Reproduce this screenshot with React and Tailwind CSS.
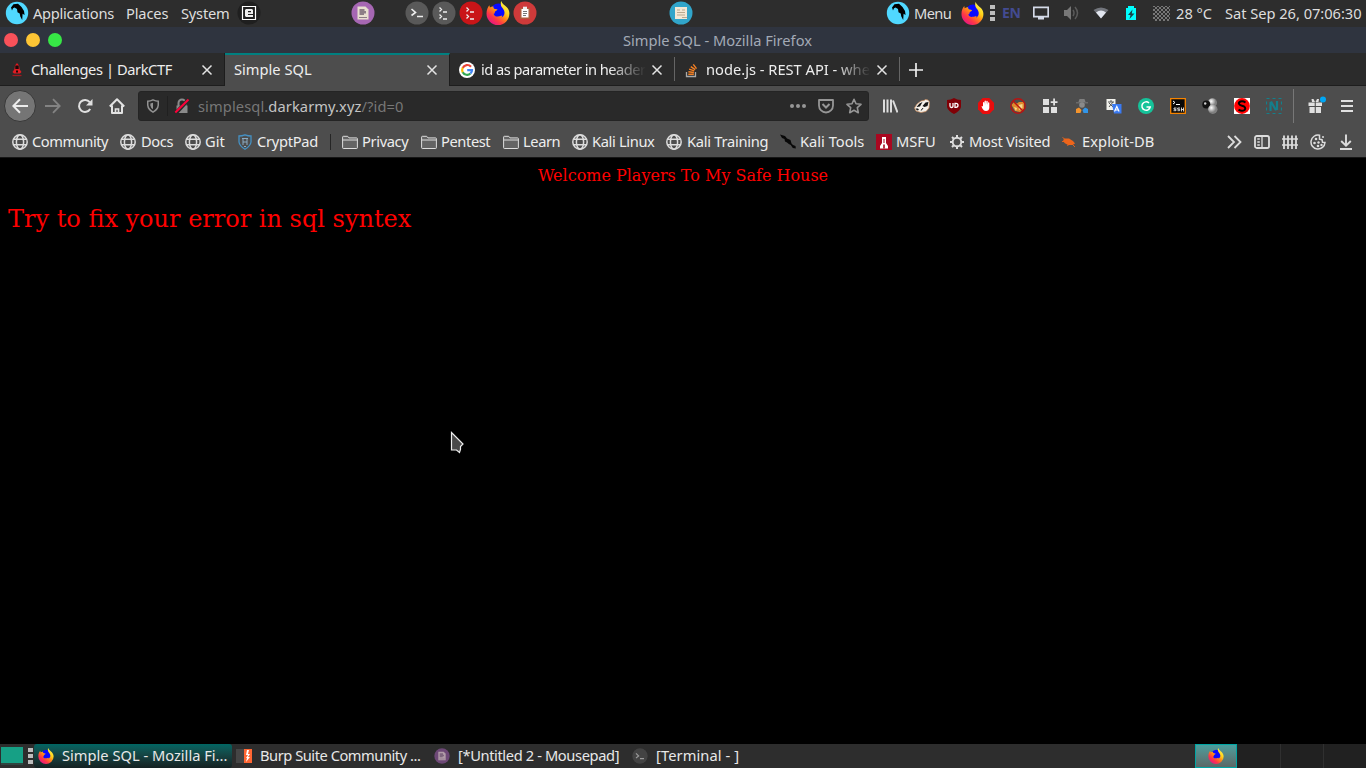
import React from "react";

const Svg = ({ s = 16, vb = "0 0 16 16", className = "", children }) => (
  <svg width={s} height={s} viewBox={vb} fill="none" className={"shrink-0 " + className}>{children}</svg>
);
const Slot = ({ className, children }) => (
  <div className={"flex shrink-0 items-center whitespace-nowrap " + className}>{children}</div>
);

const Firefox = ({ s = 22, id }) => (
  <Svg s={s} vb="0 0 24 24">
    <defs>
      <linearGradient id={id} x1="20" y1="2" x2="4" y2="22" gradientUnits="userSpaceOnUse">
        <stop offset="0" stopColor="#fff44f" /><stop offset=".3" stopColor="#ffd31a" /><stop offset=".5" stopColor="#ff8a16" /><stop offset=".75" stopColor="#ff3647" /><stop offset="1" stopColor="#e31587" />
      </linearGradient>
    </defs>
    <circle cx="12.500" cy="10.500" r="8" fill="#0a0aff" />
    <path fill={`url(#${id})`} d="M15.200 0c1 3 3.500 4.200 5.600 6.300 1.600 1.700 2.600 3.800 2.600 6.200A11.400 11.400 0 0 1 12 24 11.500 11.500 0 0 1 .5 12.500C.5 8.800 1.800 6 3.400 4.200l.5 2.200C5 5.700 6.200 5.300 7.500 5.500 7.200 7.200 8 8 10.500 8.200l1 .3c-.4 1.100-2.300 1.400-2.600 2.600-.4 1.200.2 1.700-1.300 1.600.5 2 2 3 4.300 2.800 2.200-.2 3.100-.7 4.200-1 .2.800-.2 1.400-.7 1.900 2.400-.9 3.400-3.200 3-5.700-.3-2-1.600-3.200-2.700-4.700-.9-1.300-1.300-3.500-.5-6z" />
  </Svg>
);
const Parrot = () => (
  <Svg s={24} vb="0 0 24 24">
    <circle cx="12" cy="12" r="11.200" fill="#50d8ff" />
    <path fill="#000" d="M6 6.500 8.500 3.300 13 2.800l3.500 3.200L19 10l.6 4-2-1.300-.4 6.300-1.900-3.500-.6-3-2.200-1.300-.5-3.200-2.500-1.500-1.500.7L7 9.500z" />
  </Svg>
);
const Disc = ({ c, s = 24, children }) => (
  <Svg s={s} vb="0 0 24 24"><circle cx="12" cy="12" r="11.500" fill={c} />{children}</Svg>
);
const NoteGlyph = () => (
  <g><path fill="#e8dfd0" d="M6.500 5.500h8l3 3v10h-11z" /><path fill="#8d7f86" d="M8.500 8h5v2h1.500v2.500h-2V14H8.500zM8 16h8v1H8z" /></g>
);
const TwoPrompts = () => <path stroke="#eee" strokeWidth="1.300" d="m7.500 6.500 2 2-2 2m3.500.5h4M7.500 13.500l2 2-2 2m3.500.5h4" />;
const Globe = () => (
  <Svg><g stroke="#dcdcdc" strokeWidth="1.500"><circle cx="8" cy="8" r="7.200" /><ellipse cx="8" cy="8" rx="3.600" ry="7.200" /><path d="M1.500 5.300h13M1.500 10.700h13" /></g></Svg>
);
const Folder = () => (
  <Svg><path d="M.6 13.700V3.100c0-.5.3-.8.8-.8h4.300l1.300 1.600h7.600c.5 0 .8.300.8.800v9.100c0 .4-.3.700-.7.700H1.300c-.4 0-.7-.3-.7-.8z" fill="#646464" stroke="#ddd" /><path d="M.8 6h14.500" stroke="#ddd" /></Svg>
);
const Close = () => <Svg s={12} vb="0 0 12 12"><path d="m1.500 1.500 9 9m0-9-9 9" stroke="#e3e3e3" strokeWidth="1.500" /></Svg>;
const Dots = () => (
  <div className="flex w-[5px] shrink-0 flex-col gap-[2px]">
    <div className="h-[4px] bg-[#bdbdbd]" /><div className="h-[4px] bg-[#bdbdbd]" /><div className="h-[4px] bg-[#bdbdbd]" />
  </div>
);

const TopPanel = () => (
  <div className="flex h-[27px] items-center bg-[#2d2d2d] pb-px text-[#dedede]">
    <Slot className="w-[33px] pl-[5px]"><Parrot /></Slot>
    <Slot className="w-[93px] tracking-[-0.27px]">Applications</Slot>
    <Slot className="w-[55px] tracking-[-0.15px]">Places</Slot>
    <Slot className="w-[56px] tracking-[-0.2px]">System</Slot>
    <Slot className="w-[114px]">
      <Disc c="#1f1f1f"><path d="M5.500 5.500h13v13h-13z" stroke="#fff" strokeWidth="1.200" /><path fill="#eee" fillRule="evenodd" d="M9 8h6l1 1v4h-5v1h5v2H9l-1-1V9zm2 2v1.200h3V10z" /></Disc>
    </Slot>
    <Slot className="w-[54px]"><Disc c="#a667b3"><NoteGlyph /></Disc></Slot>
    <Slot className="w-[27px]"><Disc c="#595959"><path stroke="#eee" strokeWidth="1.600" d="m6.500 8 4 3.500-4 3M12 15.500h6" /></Disc></Slot>
    <Slot className="w-[27px]"><Disc c="#595959"><TwoPrompts /></Disc></Slot>
    <Slot className="w-[27px]"><Disc c="#c91518"><TwoPrompts /></Disc></Slot>
    <Slot className="w-[27px]"><Firefox s={24} id="f1" /></Slot>
    <Slot className="w-[156px]"><Disc c="#cf3a3a"><path fill="#b15b3c" d="M7 7h10v11H7z" /><path fill="#fff" d="M8.500 8h7v8.500h-7z" /><path d="M10 10.500h4m-4 2h4m-4 2h3" stroke="#777" /><path fill="#eee" d="M10 5.700h4v2.500h-4z" /></Disc></Slot>
    <Slot className="w-[217px]"><Disc c="#31a5ca"><path fill="#f3e8d5" d="M6 6h12v12H6z" /><path d="M8 9h3m2 0h3M8 11.500h8M8 14h8M13 16.500h5" stroke="#b8a990" /></Disc></Slot>
    <Slot className="w-[28px]"><Parrot /></Slot>
    <Slot className="w-[47px] tracking-[-0.6px]">Menu</Slot>
    <Slot className="w-[29px]"><Firefox s={23} id="f2" /></Slot>
    <Slot className="w-[12px]"><Dots /></Slot>
    <Slot className="w-[31px] text-[14px] font-bold tracking-[-0.4px] text-[#434b91]">EN</Slot>
    <Slot className="w-[30px]"><Svg><path d="M.8 2.300h14.400v9.400H.8z" stroke="#d4dae8" strokeWidth="1.700" /><path d="M5 12h6v2.500H5z" fill="#d4dae8" /></Svg></Slot>
    <Slot className="w-[30px]"><Svg><path fill="#777" d="M1 5h3l4-4v14l-4-4H1z" /><path d="M10 5q2 3 0 6m2-9q5 6 0 12" stroke="#5b5b5b" strokeWidth="1.500" /></Svg></Slot>
    <Slot className="w-[30px]"><Svg><path fill="#72757c" d="M.5 5Q8 0 15.500 5L8 13z" /><path fill="#e2e6ef" d="M3 7.500Q8 3.500 13 7.500L8 13.500z" /></Svg></Slot>
    <Slot className="w-[30px]"><Svg><path fill="#00fdfd" d="M5 1h6v2h2v12H3V3h2z" /><path fill="#174247" d="M9.500 4.500 5 10h2.500l-1 4 5-5.500H8.800z" /></Svg></Slot>
    <Slot className="w-[23px]">
      <Svg s={17} vb="0 0 17 17">
        <defs><pattern id="chk" width="4" height="4" patternUnits="userSpaceOnUse"><path fill="#777" d="M0 0h2v2H0zM2 2h2v2H2z" /></pattern></defs>
        <path fill="url(#chk)" d="M0 1h17v15H0z" />
      </Svg>
    </Slot>
    <Slot className="w-[49px]">28 °C</Slot>
    <Slot className="tracking-[-0.03px]">Sat Sep 26, 07:06:30</Slot>
  </div>
);

const TitleBar = () => (
  <div className="flex h-[26px] items-center bg-[#2f343f]">
    <div className="flex w-[69px] shrink-0 gap-[8px] pl-[4px]">
      <div className="size-[14px] rounded-full bg-[#f8515a]" />
      <div className="size-[14px] rounded-full bg-[#fdc535]" />
      <div className="size-[14px] rounded-full bg-[#37e746]" />
    </div>
    <div className="flex-1 text-center text-[#a3aab6]">Simple SQL - Mozilla Firefox</div>
  </div>
);

const TabStrip = () => (
  <div className="flex h-[33px] items-center bg-[#2b2b2b] text-[#ededed] [&_svg]:translate-y-px">
    <div className="flex h-full w-[225px] shrink-0 items-center border-r border-b border-[#1d1d1d] pl-[9px]">
      <Svg className="mr-[6px]"><path fill="#e01b22" d="M6 3.500 8 1l2 2.500.7 4L12.500 10 11 11.500H5L3.500 10l1.800-2.500z" /><path fill="#1b0808" d="M6.300 3.500h3.400V7H6.300zM7 8.500h2v2H7z" /><path d="M3.500 13.500h9" stroke="#a01a1f" strokeWidth="1.300" /></Svg>
      <div className="w-[170px] tracking-[-0.42px] whitespace-nowrap">Challenges | DarkCTF</div><Close />
    </div>
    <div className="flex h-full w-[225px] shrink-0 items-center border-t-2 border-r border-t-[#008080] border-r-[#1d1d1d] bg-[#4d4d4d] pb-[3px] pl-[9px]">
      <div className="w-[192px] whitespace-nowrap">Simple SQL</div><Close />
    </div>
    <div className="flex h-full flex-1 items-center border-b border-[#1d1d1d]">
      <div className="flex h-[24px] w-[225px] shrink-0 items-center border-r border-[#656565] pl-[9px]">
        <Svg className="mr-[6px]"><circle cx="8" cy="8" r="8" fill="#fff" /><g strokeWidth="2.200"><path d="M12 4.700A5 5 0 0 0 3.700 6" stroke="#ea4335" /><path d="M3.700 5.800a5 5 0 0 0 0 4.600" stroke="#fbbc05" /><path d="M3.700 10.200a5 5 0 0 0 7.800 1.300" stroke="#34a853" /><path d="M11.500 11.500c1.100-1 1.500-2 1.500-3.300H8.200" stroke="#4285f4" /></g></Svg>
        <div className="w-[170px] tracking-[-0.53px] whitespace-nowrap [mask-image:linear-gradient(to_right,#000_76%,transparent_97%)]">id as parameter in header</div><Close />
      </div>
      <div className="flex h-[24px] w-[225px] shrink-0 items-center border-r border-[#656565] pl-[9px]">
        <Svg className="mr-[6px]"><path d="M2.500 10v4.500h9V10" stroke="#aaa" strokeWidth="1.300" /><path d="M4.300 12.300h5.500M4.400 9.800l5.500.7M5.100 7.200l5.200 1.600M6.800 4.600l4.400 3M9.300 2.300l3.200 4.300" stroke="#f48024" strokeWidth="1.400" /></Svg>
        <div className="w-[170px] whitespace-nowrap [mask-image:linear-gradient(to_right,#000_76%,transparent_97%)]">node.js - REST API - whe</div><Close />
      </div>
      <Svg className="ml-[8px]"><path d="M8 1v14M1 8h14" stroke="#eee" strokeWidth="1.700" /></Svg>
    </div>
  </div>
);

const Ext = ({ children }) => <div className="flex w-[32px] shrink-0 justify-center"><Svg>{children}</Svg></div>;

const NavBar = () => (
  <div className="flex h-[40px] items-center bg-[#4d4d4d]">
    <div className="ml-[4px] flex size-[32px] shrink-0 items-center justify-center rounded-full border border-[#383838] bg-[#757575]">
      <Svg><path d="M16 8H1.500M8 1.200 1.300 8 8 14.800" stroke="#ececec" strokeWidth="2" /></Svg>
    </div>
    <Svg className="ml-[9px]"><path d="M0 8h14.500M8 1.200 14.700 8 8 14.800" stroke="#838383" strokeWidth="1.800" /></Svg>
    <Svg className="ml-[16px]"><path d="M13.200 11a6 6 0 1 1-.5-6.800" stroke="#e0e0e0" strokeWidth="2" /><path fill="#e0e0e0" d="M15.500 1v6.500H9z" /></Svg>
    <Svg className="ml-[16px]"><path d="M.8 8.500 8 1.300l7.200 7.200M3 7.500V15h10V7.500" stroke="#e3e3e3" strokeWidth="2" strokeLinejoin="round" /><path d="M6.500 15v-4h3v4" stroke="#e3e3e3" strokeWidth="1.700" /></Svg>
    <div className="ml-[13px] flex h-[30px] w-[731px] shrink-0 items-center rounded-[3px] border border-[#242424] bg-[#292929]">
      <Svg s={14} className="ml-[7px]"><path d="M8 1Q11 2.500 14 2.500V7Q13.500 12 8 15 2.500 12 2 7V2.500Q5 2.500 8 1z" stroke="#929292" strokeWidth="1.700" /><path d="M8 4.200v7.600Q5.300 10 5 7.500V5z" fill="#929292" /></Svg>
      <div className="ml-[7px] h-[20px] w-px bg-[#202020]" />
      <Svg className="ml-[6px]"><path d="M4.500 8V5a3.500 3.500 0 0 1 7 0v3" stroke="#8b8b8b" strokeWidth="2" /><path fill="#8b8b8b" d="M2.500 7.500h11V15h-11z" /><path d="M1.500 15.500 14 2" stroke="#292929" strokeWidth="4" /><path d="M1.300 14.500 14.500 1.500" stroke="#ff0039" strokeWidth="2" /></Svg>
      <div className="ml-[8px] w-[592px] tracking-[0.1px] whitespace-nowrap text-[#777]">simplesql.<span className="text-[#c4c4c4]">darkarmy.xyz</span>/?id=0</div>
      <Svg><g fill="#969696"><circle cx="2" cy="8" r="2" /><circle cx="8" cy="8" r="2" /><circle cx="14" cy="8" r="2" /></g></Svg>
      <Svg className="ml-[12px]"><path d="M1 2h14v5.500a7 7 0 0 1-14 0z" stroke="#969696" strokeWidth="1.800" strokeLinejoin="round" /><path d="m4.500 6 3.500 3.500L11.500 6" stroke="#969696" strokeWidth="2" /></Svg>
      <Svg className="ml-[12px]"><path d="m8 1.300 2 4.500 5 .5-3.700 3.400 1 5L8 12.200l-4.300 2.500 1-5L1 6.300l5-.5z" stroke="#969696" strokeWidth="1.600" strokeLinejoin="round" /></Svg>
    </div>
    <div className="ml-[5px] flex shrink-0">
      <Ext><path d="M2 1.500v13M5.500 1.500v13M9 1.500v13M11 2.500l4.500 12" stroke="#ddd" strokeWidth="2" /></Ext>
      <Ext><path fill="#f5f1eb" stroke="#c98a5a" strokeWidth=".7" d="M.5 10 3 6 7 3l3-.5 1.500-1L14 2l1.500 2-.5 6-3 3.500-5 1L2 13z" /><path fill="#161616" d="m2.500 9 3-3.500L8.500 4 6 8.500zM8.500 8l3-3.500L14.500 4l-1 4-3 1zM1.500 10.500l2.500 0L5 12l-2 .5zM8.500 10l1 .2-2 2.300h-1z" /></Ext>
      <Ext><path fill="#800006" d="M8 0q3 2 7 2v7q-1 4-7 7-6-3-7-7V2q4 0 7-2z" /><path d="M4 5v3q0 1.500 1.500 1.500T7 8V5m2 .3v4h1q2 0 2-2t-2-2z" stroke="#fff" strokeWidth="1.300" /></Ext>
      <Ext><path fill="#e90d0d" d="M4.700 0h6.600L16 4.700v6.600L11.300 16H4.700L0 11.300V4.700z" /><path fill="#fff" d="M5 4.500q.7-.8 1.300 0V7l.3-4q.7-.8 1.300 0V7l.5-4q.8-.7 1.300.2V7l.4-2.500q.8-.5 1.200.3V10q-.3 3-3.300 3-2.300 0-3.500-2.300L3.500 8.500q.5-1 1.500 0z" /></Ext>
      <Ext><path fill="#e08a2c" d="M1.500 7 4 4l3 1.500L9 4l5 0v7l-4 3-5-1z" /><path fill="#f7d98c" d="m8.500 7 4-1v4L9 12zM4 9l3 1-1 3z" /><circle cx="8" cy="8" r="7.200" stroke="#b81413" strokeWidth="1.400" /><path d="m3 3 10 10" stroke="#b81413" strokeWidth="1.300" /></Ext>
      <Ext><path fill="#e0e0e0" d="M1 1h6v6H1zM1 9h6v6H1zM9 9h6v6H9zM11.200.5h1.800v2.700h2.500V5H13v2.500h-1.800V5H8.700V3.200h2.500z" /></Ext>
      <Ext><path fill="#808080" d="M5.500 1h5L11.500 4h-7z" /><path fill="#6b6b6b" d="M2 4h12v1.500H2z" /><circle cx="8" cy="7" r="2.800" fill="#8a8a8a" /><path fill="#f4942d" d="M2 15v-4l3-1.500 2.500 2.500-1 3z" /><path fill="#3295e8" d="M14 15v-4l-3-1.500L8.500 12l1 3z" /></Ext>
      <Ext><path fill="#f1f1ec" d="M.5 1h9v11h-9z" /><path d="M2 4h6M5 2v2M3 9l4-5M3 5l4 4" stroke="#555" /><path fill="#3a7af2" d="M6 6h9.500v9.500H8z" /><path d="m8.500 13.500 2.300-5 2.300 5m-3.800-1.500h3" stroke="#fff" strokeWidth="1.200" /></Ext>
      <Ext><circle cx="8" cy="8" r="8" fill="#15c39a" /><path d="M11 5A4.200 4.200 0 1 0 12.200 9H8.500" stroke="#fff" strokeWidth="1.500" /></Ext>
      <Ext><path fill="#080808" stroke="#f68400" strokeWidth="1.300" d="M.7.7h14.600v14.600H.7z" /><path d="m3 3 2 1.500L3 6m3 .5h4" stroke="#fff" /><path d="M6.500 10H4v1.300h2v1.400H3.500M10 10H7.700v1.300h2v1.400H7.500M11.500 9.500v4m2-4v4m-2-2h2" stroke="#fff" strokeWidth=".8" /></Ext>
      <Ext><defs><radialGradient id="b1" cx=".35" cy=".35"><stop stopColor="#fff" /><stop offset="1" stopColor="#808080" /></radialGradient></defs><circle cx="10.500" cy="4.700" r="4.500" fill="url(#b1)" /><circle cx="4.300" cy="6.500" r="4" fill="#111" /><circle cx="3.200" cy="5.500" r="1.200" fill="#ccc" /><circle cx="10.800" cy="11.200" r="4.700" fill="url(#b1)" /></Ext>
      <Ext><path fill="#fff" d="M0 0h16v16H0z" /><circle cx="8" cy="8" r="7.900" fill="#f00" /><path d="M11.500 4.500Q9 2.700 6.500 3.500C3.500 5 5 7 8 7.700s4.200 2.500 2.500 4.300q-2.500 1.800-6-.3" stroke="#000" strokeWidth="2" /></Ext>
      <Ext><path d="M.5.500h15v15H.5z" stroke="#12808c" strokeWidth="1.200" strokeDasharray="3 3" /><path d="M4.500 13V5l1-.5 4 7 1.500-.5V3" stroke="#147e8b" strokeWidth="2.200" /></Ext>
    </div>
    <div className="ml-[3px] h-[34px] w-px shrink-0 bg-[#777]" />
    <Svg s={20} vb="0 0 20 20" className="ml-[12px]"><path fill="#e0e0e0" d="M2.500 6.500h6.200v3.500H2.500zM9.800 6.500H16v3.500H9.800zM3.500 11h5.200v6H3.500zM9.800 11H15v6H9.800zM5.500 3h2l1.500 3h-3zM13 3h-2L9.500 6h3z" /><circle cx="17" cy="3.500" r="3" fill="#00a7f5" /></Svg>
    <Svg className="ml-[13px]"><path d="M2 3h12M2 8h12M2 13h12" stroke="#e0e0e0" strokeWidth="2" /></Svg>
  </div>
);

const Bookmarks = () => (
  <div className="flex h-[32px] items-center border-b border-[#161616] bg-[#4d4d4d] pb-px pl-[12px] text-[#ededed] [&_svg]:translate-y-px">
    <Slot className="w-[108px] gap-[4px] tracking-[-0.45px]"><Globe />Community</Slot>
    <Slot className="w-[65px] gap-[5px] tracking-[-0.35px]"><Globe />Docs</Slot>
    <Slot className="w-[52px] gap-[4px]"><Globe />Git</Slot>
    <Slot className="w-[93px] gap-[4px] tracking-[-0.28px]"><Svg><path d="M8 .8q3 1.200 6 1.200v6q-.5 4-6 7.200Q2.500 12 2 8V2q3 0 6-1.200z" stroke="#4591c4" strokeWidth="1.300" /><path d="M5 4.500h6M6 5v6m4-6v6M6 8h4M7 12l1 1 1-1" stroke="#8bacc4" /></Svg>CryptPad</Slot>
    <Slot className="w-[12px]"><div className="h-[16px] w-px translate-y-px bg-[#252525]" /></Slot>
    <Slot className="w-[79px] gap-[4px] tracking-[-0.35px]"><Folder />Privacy</Slot>
    <Slot className="w-[82px] gap-[4px] tracking-[-0.4px]"><Folder />Pentest</Slot>
    <Slot className="w-[69px] gap-[4px] tracking-[-0.4px]"><Folder />Learn</Slot>
    <Slot className="w-[94px] gap-[4px] tracking-[-0.35px]"><Globe />Kali Linux</Slot>
    <Slot className="w-[114px] gap-[5px] tracking-[-0.27px]"><Globe />Kali Training</Slot>
    <Slot className="w-[96px] gap-[4px]"><Svg><path fill="#080808" d="m0 .5 5 1.500 2 2.500 3.500 1.500 1 3.500 1.500 1.500 2.500 1 .3 2.500-3-.5-2-3-2-1L7 8.500 5 7.500 4.500 5 2 4z" /></Svg>Kali Tools</Slot>
    <Slot className="w-[73px] gap-[4px]"><Svg><path fill="#a90720" d="M0 0h16v16H0z" /><path fill="#fff" d="M6 3h4v6l2 3v2.500H4V12l2-3z" /><path fill="#a90720" d="M7.500 5h1v4h-1zM7.200 10.500h1.600v4H7.200z" /></Svg>MSFU</Slot>
    <Slot className="w-[112px] gap-[4px] tracking-[-0.25px]"><Svg><circle cx="8" cy="8" r="4.300" stroke="#ddd" strokeWidth="1.900" /><path d="M8 1v2.500M8 12.500V15M1 8h2.500m9 0H15M3 3l1.800 1.800m6.400 6.400L13 13M13 3l-1.800 1.800m-6.400 6.400L3 13" stroke="#ddd" strokeWidth="2" /></Svg>Most Visited</Slot>
    <Slot className="w-[165px] gap-[5px] tracking-[0.08px]"><Svg><path fill="#ed651b" d="m2 6 2-1.500 4 0 4 2.500 2 2.500L11.500 11 7 11 3.500 9z" /><path d="m1.500 3.500 3 2M1 7.500h3m4 2L6.500 12M10 9l4 4" stroke="#ed651b" strokeWidth=".9" /></Svg>Exploit-DB</Slot>
    <Slot className="w-[28px]"><Svg><path d="m2 2 6 6-6 6M8.500 2l6 6-6 6" stroke="#ddd" strokeWidth="1.800" /></Svg></Slot>
    <Slot className="w-[28px]"><Svg><rect x="1" y="2" width="14" height="12" rx="1.800" stroke="#ddd" strokeWidth="1.800" /><path d="M8 2v12M3.300 5h2.500m-2.500 3h2.500m-2.500 3h2.500" stroke="#ddd" strokeWidth="1.300" /></Svg></Slot>
    <Slot className="w-[28px]"><Svg><path d="M2 1.500v13.500M6 1.500v13.500M10 1.500v13.500M14 1.500v13.500" stroke="#ddd" strokeWidth="1.800" /><path d="M0 5h16M0 11h16" stroke="#ddd" strokeWidth="1.500" /></Svg></Slot>
    <Slot className="w-[28px]"><Svg><path d="M9.500 1.200A7 7 0 1 0 15 8.500l-2.500-.3-.5-2.500-2.500-.5z" stroke="#ddd" strokeWidth="1.500" /><g fill="#ddd"><circle cx="6" cy="5" r="1.300" /><circle cx="4.500" cy="9" r="1.300" /><circle cx="8.500" cy="8.500" r="1.200" /><circle cx="8" cy="12" r="1.300" /><circle cx="11.500" cy="11" r="1.200" /><circle cx="13" cy="3" r="1" /></g></Svg></Slot>
    <Slot><Svg><path d="M8 .5v11M3.200 7 8 11.700 12.800 7M2 15h12" stroke="#ddd" strokeWidth="1.900" /></Svg></Slot>
  </div>
);

const Taskbar = () => (
  <div className="flex h-[24px] items-center bg-[#2d2d2d] text-[#e8e8e8]">
    <div className="mr-[5px] ml-px flex h-[18px] w-[22px] shrink-0 items-end bg-[#16a085]"><div className="h-[2px] w-full bg-[#30443f]" /></div>
    <Dots />
    <div className="ml-px flex h-full w-[198px] shrink-0 items-center rounded-[3px] bg-gradient-to-b from-[#006663] to-[#142122] pb-[2px] pl-[4px] [&_svg]:translate-y-px">
      <Firefox s={16} id="f3" /><span className="ml-[8px] whitespace-nowrap">Simple SQL - Mozilla Fi...</span>
    </div>
    <Slot className="ml-[4px] w-[198px] gap-[8px] pb-[2px] tracking-[-0.46px] [&_svg]:translate-y-px"><Svg><path fill="#454545" d="M0 1h8v14H0z" /><path fill="#ff6633" d="M8 1h8v14H8z" /><path fill="#fff" d="m11 2-1 5h2l-2 3h1l-1 4 4-5h-2l2-3h-2l1-4z" /></Svg>Burp Suite Community ...</Slot>
    <Slot className="w-[198px] gap-[8px] pb-[2px] tracking-[-0.38px] [&_svg]:translate-y-px"><Disc s={16} c="#6d4876"><g opacity=".55"><NoteGlyph /></g></Disc>[*Untitled 2 - Mousepad]</Slot>
    <Slot className="w-[563px] gap-[8px] pb-[2px] tracking-[0.1px] [&_svg]:translate-y-px"><Disc s={16} c="#434343"><path d="m6 8 4 4-4 3m6 1h6" stroke="#999" strokeWidth="1.700" /></Disc>[Terminal - ]</Slot>
    <div className="flex h-full w-[42px] shrink-0 items-center justify-center border border-[#00a5a4] bg-gradient-to-b from-[#499e9d] to-[#5b6867]"><Firefox s={16} id="f4" /></div>
    <div className="h-full w-[44px] shrink-0 border-r border-[#303030] bg-[#212121]" />
    <div className="h-full w-[43px] shrink-0 border-r border-[#303030] bg-[#212121]" />
    <div className="h-full flex-1 bg-[#212121]" />
  </div>
);

export default function App() {
  return (
    <div className="relative flex h-[768px] w-[1366px] flex-col overflow-hidden bg-black font-['Noto_Sans',sans-serif] text-[14.667px] leading-[20px]">
      <TopPanel />
      <TitleBar />
      <TabStrip />
      <NavBar />
      <Bookmarks />
      <main className="flex-1 bg-black px-[8px] pt-[8px] font-['DejaVu_Serif',serif] text-[#f00]">
        <div className="text-center text-[16px] leading-[19px]">Welcome Players To My Safe House</div>
        <div className="mt-[20px] text-[24px] leading-[28px]">Try to fix your error in sql syntex</div>
      </main>
      <Taskbar />
      <svg className="absolute top-[431px] left-[450px]" width="15" height="24" viewBox="0 0 15 24"><path d="M1.500 1.500v17.500h5l3 2.500 1-3v-3l2.500-2.500z" fill="#4a4a4a" stroke="#eee" strokeWidth="1.200" /></svg>
    </div>
  );
}
